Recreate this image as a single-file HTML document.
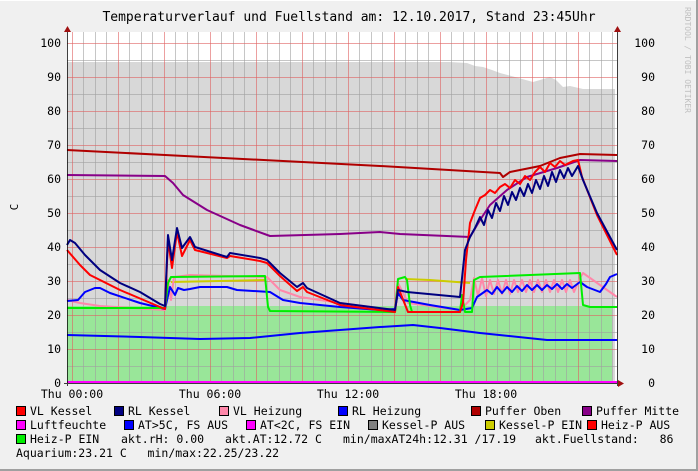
<!DOCTYPE html>
<html><head><meta charset="utf-8"><style>
html,body{margin:0;padding:0;background:#f0f0f0}
svg{display:block}
text{font-family:"DejaVu Sans Mono","Liberation Mono",monospace;white-space:pre}
</style></head><body>
<svg width="698" height="471" viewBox="0 0 698 471" xmlns="http://www.w3.org/2000/svg">
<rect x="0" y="0" width="698" height="471" fill="#f0f0f0"/>
<rect x="0" y="0" width="698" height="1" fill="#ffffff"/>
<rect x="696" y="0" width="2" height="471" fill="#a0a0a0"/>
<rect x="0" y="469" width="698" height="2" fill="#a0a0a0"/>
<text x="349" y="21" font-size="13" text-anchor="middle" fill="#000">Temperaturverlauf und Fuellstand am: 12.10.2017, Stand 23:45Uhr</text>
<text transform="translate(685,7) rotate(90)" font-size="8" fill="#c0c0c0">RRDTOOL / TOBI OETIKER</text>
<text transform="translate(18,207) rotate(-90)" font-size="11" text-anchor="middle" fill="#000">C</text>
<rect x="67" y="32" width="550" height="351" fill="#ffffff"/>
<polygon fill="#d8d8d8" points="67,383 67,62 450,62 467,63 475,66 483,67 492,70 500,73 515,77 533,82 540,80 550,77 556,80 563,87 570,86 583,89 615,89 615,383"/>
<polygon fill="#99e699" points="67,383 67,306 612,306 612,383"/>
<g stroke="#a0a0a0" stroke-opacity="0.6" stroke-width="1">
<path d="M67,366.5H617M67,332.5H617M67,298.5H617M67,264.5H617M67,230.5H617M67,196.5H617M67,162.5H617M67,128.5H617M67,94.5H617M67,60.5H617"/>
<path d="M83.5,32V383M95.5,32V383M106.5,32V383M129.5,32V383M141.5,32V383M152.5,32V383M175.5,32V383M187.5,32V383M198.5,32V383M221.5,32V383M233.5,32V383M244.5,32V383M267.5,32V383M279.5,32V383M290.5,32V383M313.5,32V383M325.5,32V383M336.5,32V383M359.5,32V383M371.5,32V383M382.5,32V383M405.5,32V383M417.5,32V383M428.5,32V383M451.5,32V383M463.5,32V383M474.5,32V383M497.5,32V383M509.5,32V383M520.5,32V383M543.5,32V383M555.5,32V383M566.5,32V383M589.5,32V383M601.5,32V383M612.5,32V383"/>
</g>
<g stroke="#e06060" stroke-opacity="0.6" stroke-width="1">
<path d="M67,349.5H617M67,315.5H617M67,281.5H617M67,247.5H617M67,213.5H617M67,179.5H617M67,145.5H617M67,111.5H617M67,77.5H617M67,43.5H617"/>
<path d="M72.5,32V383M118.5,32V383M164.5,32V383M210.5,32V383M256.5,32V383M302.5,32V383M348.5,32V383M394.5,32V383M440.5,32V383M486.5,32V383M532.5,32V383M578.5,32V383"/>
</g>
<g fill="none" stroke-width="2" stroke-linejoin="round">
<polyline stroke="#0000ff" points="67,335 140,337 200,339 250,338 300,333 340,330 380,327 413,325 440,328 480,333 547,340 617,340"/>
<polyline stroke="#b00000" points="67,150 165,155 380,166 500,173 503,177 510,172 540,166 560,158 580,154 617,155"/>
<polyline stroke="#880088" points="67,175 165,176 173,183 183,195 207,210 240,225 270,236 340,234 380,232 400,234 470,237 480,220 490,205 507,190 527,177 557,168 580,160 617,161"/>
<polyline stroke="#cccc00" points="171,282 265,280"/>
<polyline stroke="#cccc00" points="405,279 430,280 470,283"/>
<polyline stroke="#ff88aa" points="67,300 80,303 100,306 165,310 168,280 171,300 174,277 190,275 267,277 280,290 300,297 340,303 395,310 398,283 408,303 460,310 470,300 474,278 478,296 482,278 486,296 490,280 494,294 498,280 502,294 506,280 510,294 514,280 518,292 522,280 526,292 530,280 534,292 538,280 542,292 546,280 550,292 554,280 558,292 562,280 566,292 570,280 574,292 580,278 583,273 600,285 617,297"/>
<polyline stroke="#0000ff" points="67,301 78,300 85,292 95,288 100,288 110,293 140,303 165,309 170,287 175,295 178,288 184,290 190,289 200,287 227,287 237,290 270,292 283,300 300,303 340,307 380,310 395,309 398,293 403,300 430,305 460,310 472,308 477,297 487,290 492,294 497,287 502,293 507,287 512,292 517,286 522,291 527,285 532,290 537,285 542,290 547,285 552,289 557,284 562,289 567,284 572,288 580,282 587,287 600,292 606,284 610,277 617,274"/>
<polyline stroke="#00ee00" points="67,308 165,308 168,283 171,277 265,276 268,307 270,311 395,312 398,279 405,277 407,280 410,305 412,312 460,312 462,295 465,312 472,312 474,280 480,277 580,273 583,305 590,307 617,307"/>
<polyline stroke="#ff0000" points="67,250 80,265 90,275 100,280 120,290 160,307 165,309 168,240 172,268 177,232 182,256 190,240 195,250 227,258 230,256 260,261 267,263 280,276 297,291 303,287 307,292 340,305 395,312 398,287 408,312 460,312 463,303 466,260 470,223 475,210 480,198 485,195 490,190 495,193 500,187 505,184 510,188 515,180 520,184 525,176 530,180 535,172 540,167 545,172 550,163 555,167 560,161 565,165 573,161 578,160 582,177 597,215 617,255"/>
<polyline stroke="#000080" points="67,245 70,240 75,243 85,255 100,270 120,283 140,292 160,304 165,306 168,235 172,260 177,228 182,248 190,237 195,247 227,257 230,253 260,258 267,260 280,273 297,287 303,283 307,288 340,303 395,310 398,290 407,292 460,297 465,250 470,237 475,228 480,217 484,225 488,210 492,218 496,203 500,211 504,196 508,205 512,192 516,200 520,188 524,196 528,184 532,193 536,180 540,189 544,176 548,186 552,172 556,182 560,170 564,178 568,168 572,176 578,166 583,180 597,213 617,250"/>
<polyline stroke="#ff00ff" points="67,382 617,382"/>
</g>
<path d="M67.5,30V386M617.5,30V386M64,383.5H623" stroke="#000" stroke-width="1" stroke-opacity="0.75"/>
<polygon points="64,32 67.5,26 71,32" fill="#a01010"/>
<polygon points="614,32 617.5,26 621,32" fill="#a01010"/>
<polygon points="618,380 624,383.5 618,387" fill="#a01010"/>
<g font-size="11.5" fill="#000">
<g text-anchor="end">
<text x="61" y="47">100</text><text x="61" y="81">90</text><text x="61" y="115">80</text><text x="61" y="149">70</text><text x="61" y="183">60</text><text x="61" y="217">50</text><text x="61" y="251">40</text><text x="61" y="285">30</text><text x="61" y="319">20</text><text x="61" y="353">10</text><text x="61" y="387">0</text>
</g>
<g text-anchor="end">
<text x="655" y="47">100</text><text x="655" y="81">90</text><text x="655" y="115">80</text><text x="655" y="149">70</text><text x="655" y="183">60</text><text x="655" y="217">50</text><text x="655" y="251">40</text><text x="655" y="285">30</text><text x="655" y="319">20</text><text x="655" y="353">10</text><text x="655" y="387">0</text>
</g>
<g text-anchor="middle">
<text x="72" y="398">Thu 00:00</text><text x="210" y="398">Thu 06:00</text><text x="348" y="398">Thu 12:00</text><text x="486" y="398">Thu 18:00</text>
</g>
</g>
<g stroke="#000" stroke-width="1">
<rect x="16.5" y="406.5" width="9" height="9" fill="#ff0000"/>
<rect x="114.5" y="406.5" width="9" height="9" fill="#000080"/>
<rect x="219.5" y="406.5" width="9" height="9" fill="#ff88aa"/>
<rect x="338.5" y="406.5" width="9" height="9" fill="#0000ff"/>
<rect x="471.5" y="406.5" width="9" height="9" fill="#b00000"/>
<rect x="582.5" y="406.5" width="9" height="9" fill="#880088"/>
<rect x="16.5" y="420.5" width="9" height="9" fill="#ff00ff"/>
<rect x="124.5" y="420.5" width="9" height="9" fill="#0000ff"/>
<rect x="246.5" y="420.5" width="9" height="9" fill="#ff00ff"/>
<rect x="368.5" y="420.5" width="9" height="9" fill="#808080"/>
<rect x="485.5" y="420.5" width="9" height="9" fill="#cccc00"/>
<rect x="587.5" y="420.5" width="9" height="9" fill="#ff0000"/>
<rect x="16.5" y="434.5" width="9" height="9" fill="#00ee00"/>
</g>
<g font-size="11.5" fill="#000">
<text x="30" y="415">VL Kessel</text>
<text x="128" y="415">RL Kessel</text>
<text x="233" y="415">VL Heizung</text>
<text x="352" y="415">RL Heizung</text>
<text x="485" y="415">Puffer Oben</text>
<text x="596" y="415">Puffer Mitte</text>
<text x="30" y="429">Luftfeuchte</text>
<text x="138" y="429">AT&gt;5C, FS AUS</text>
<text x="260" y="429">AT&lt;2C, FS EIN</text>
<text x="382" y="429">Kessel-P AUS</text>
<text x="499" y="429">Kessel-P EIN</text>
<text x="601" y="429">Heiz-P AUS</text>
<text x="30" y="443">Heiz-P EIN</text>
<text x="121" y="443">akt.rH: 0.00</text>
<text x="225" y="443">akt.AT:12.72 C</text>
<text x="343" y="443">min/maxAT24h:12.31 /17.19</text>
<text x="535" y="443">akt.Fuellstand:   86</text>
<text x="16" y="457">Aquarium:23.21 C   min/max:22.25/23.22</text>
</g>
</svg>
</body></html>
